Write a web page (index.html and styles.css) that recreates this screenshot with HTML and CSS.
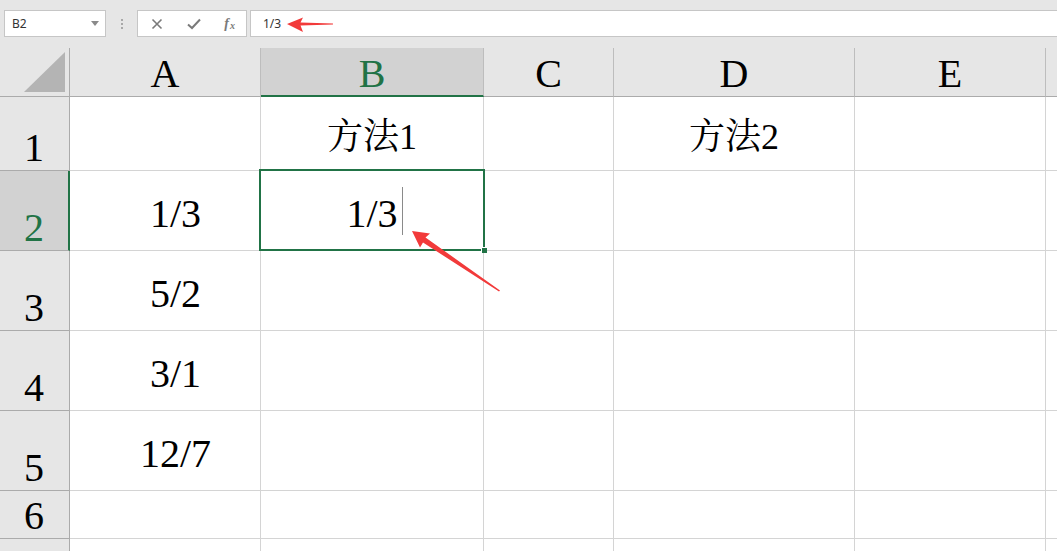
FILE: index.html
```html
<!DOCTYPE html>
<html>
<head>
<meta charset="utf-8">
<link rel="stylesheet" href="styles.css">
</head>
<body>
<div class="app">
  <div class="toolbar">
    <div class="namebox"><span>B2</span><svg class="dd" width="8" height="5" viewBox="0 0 8 5"><path d="M0 0H8L4 5Z" fill="#8a8a8a"/></svg></div>
    <div class="dots"><i></i><i></i><i></i></div>
    <div class="btns">
      <svg width="12" height="12" viewBox="0 0 12 12"><path d="M1.5 1.5L10.5 10.5M10.5 1.5L1.5 10.5" stroke="#7a7a7a" stroke-width="1.6"/></svg>
      <svg width="14" height="12" viewBox="0 0 14 12"><path d="M1 6.5L5 10L13 1.5" stroke="#7a7a7a" stroke-width="2" fill="none"/></svg>
      <span class="fx">f<span class="x">x</span></span>
    </div>
    <div class="formula">1/3</div>
  </div>
  <div class="sheet">
    <div class="corner"><svg width="42" height="40" viewBox="0 0 42 40"><path d="M41 0V40H0Z" fill="#b4b4b4"/></svg></div>
    <div class="ch">A</div>
    <div class="ch sel">B</div>
    <div class="ch">C</div>
    <div class="ch">D</div>
    <div class="ch">E</div>
    <div class="ch last"></div>

    <div class="rh">1</div>
    <div class="c"></div>
    <div class="c t cjk">方法1</div>
    <div class="c"></div>
    <div class="c t cjk">方法2</div>
    <div class="c"></div>
    <div class="c last"></div>

    <div class="rh sel">2</div>
    <div class="c t a">1/3</div>
    <div class="c t">1/3</div>
    <div class="c"></div>
    <div class="c"></div>
    <div class="c"></div>
    <div class="c last"></div>

    <div class="rh">3</div>
    <div class="c t a">5/2</div>
    <div class="c"></div>
    <div class="c"></div>
    <div class="c"></div>
    <div class="c"></div>
    <div class="c last"></div>

    <div class="rh">4</div>
    <div class="c t a">3/1</div>
    <div class="c"></div>
    <div class="c"></div>
    <div class="c"></div>
    <div class="c"></div>
    <div class="c last"></div>

    <div class="rh">5</div>
    <div class="c t a">12/7</div>
    <div class="c"></div>
    <div class="c"></div>
    <div class="c"></div>
    <div class="c"></div>
    <div class="c last"></div>

    <div class="rh">6</div>
    <div class="c"></div>
    <div class="c"></div>
    <div class="c"></div>
    <div class="c"></div>
    <div class="c"></div>
    <div class="c last"></div>

    <div class="rh"></div>
    <div class="c"></div>
    <div class="c"></div>
    <div class="c"></div>
    <div class="c"></div>
    <div class="c"></div>
    <div class="c last"></div>

    <div class="selection"><span class="handle"></span></div>
    <div class="caret"></div>
  </div>
  <svg class="arrows" width="1057" height="551" viewBox="0 0 1057 551">
    <path d="M287 24L303 17.5L300.5 22.5L333 23.5L333 24.5L300.5 25.5L303 32Z" fill="#f23a3a"/>
    <path d="M412 231L430 233.5L425.5 237.5L500 290.5L499 291.5L423 242.5L420 247.5Z" fill="#f23a3a"/>
  </svg>
</div>
</body>
</html>
```

FILE: styles.css
```css
* { box-sizing: border-box; }
html, body { margin: 0; padding: 0; }
body {
  width: 1057px;
  height: 551px;
  overflow: hidden;
  background: #ffffff;
  font-family: "Liberation Serif", "Noto Serif CJK SC", "Noto Sans CJK SC", serif;
}
.app { position: relative; width: 1057px; height: 551px; }

.toolbar {
  height: 48px;
  background: #e6e6e6;
  display: flex;
  align-items: flex-start;
  padding-top: 10px;
  padding-left: 4px;
  font-family: "Noto Sans", "Liberation Sans", sans-serif;
  font-size: 12px;
  color: #333;
}
.namebox {
  width: 102px;
  height: 27px;
  background: #fff;
  border: 1px solid #c6c6c6;
  display: flex;
  align-items: center;
  justify-content: space-between;
  padding: 0 6px 0 7px;
}
.namebox span { line-height: 1; }
.dots {
  width: 31px;
  height: 27px;
  display: flex;
  flex-direction: column;
  align-items: center;
  justify-content: center;
  gap: 2px;
}
.dots i { display: block; width: 2px; height: 2px; background: #a8a8a8; }
.btns {
  width: 110px;
  height: 27px;
  background: #fff;
  border: 1px solid #c6c6c6;
  display: flex;
  align-items: center;
  justify-content: space-between;
  padding: 0 11px 0 13px;
}
.fx {
  font-family: "Liberation Serif", serif;
  font-style: italic;
  font-weight: bold;
  font-size: 14px;
  color: #7a7a7a;
  line-height: 1;
  display: flex;
  align-items: flex-end;
}
.fx .x { font-size: 10px; margin-left: 1px; }
.formula {
  margin-left: 3px;
  flex: 1;
  height: 27px;
  background: #fff;
  border: 1px solid #c6c6c6;
  border-right: none;
  display: flex;
  align-items: center;
  padding-left: 12px;
}

.sheet {
  position: relative;
  display: grid;
  grid-template-columns: 70px 191px 223px 130px 241px 191px 1fr;
  grid-template-rows: 49px 74px 80px 80px 80px 80px 48px 13px;
  font-size: 40px;
  color: #000;
}
.corner {
  background: #e6e6e6;
  border-right: 1px solid #ababab;
  border-bottom: 1px solid #ababab;
  display: flex;
  align-items: flex-end;
  justify-content: flex-end;
  padding: 0 3px 4px 0;
}
.corner svg { display: block; }
.ch {
  background: #e6e6e6;
  border-right: 1px solid #bdbdbd;
  border-bottom: 1px solid #ababab;
  display: flex;
  align-items: flex-end;
  justify-content: center;
  line-height: 1;
  padding-bottom: 2px;
}
.ch.last { border-right: none; }
.ch.sel {
  background: #d2d2d2;
  color: #217346;
  border-bottom: 2px solid #217346;
  padding-bottom: 1px;
}
.rh {
  background: #e6e6e6;
  border-right: 1px solid #ababab;
  border-bottom: 1px solid #ababab;
  display: flex;
  align-items: flex-end;
  justify-content: center;
  line-height: 1;
  padding-bottom: 2px;
  padding-right: 1px;
}
.rh.sel {
  background: #d2d2d2;
  color: #217346;
  border-right: 2px solid #217346;
  padding-right: 0;
}
.c {
  border-right: 1px solid #d4d4d4;
  border-bottom: 1px solid #d4d4d4;
}
.c.last { border-right: none; }
.t {
  display: flex;
  align-items: center;
  justify-content: center;
  line-height: 1;
  padding-top: 6px;
}
.t.a { padding-left: 21px; }
.t.cjk { font-size: 36px; padding-top: 6px; }

.selection {
  position: absolute;
  left: 259px;
  top: 121px;
  width: 226px;
  height: 82px;
  border: 2px solid #217346;
  pointer-events: none;
}
.handle {
  position: absolute;
  right: -4px;
  bottom: -4px;
  width: 6px;
  height: 6px;
  background: #217346;
  border: 1px solid #fff;
  border-right: none;
  border-bottom: none;
}
.caret {
  position: absolute;
  left: 402px;
  top: 139px;
  width: 1px;
  height: 48px;
  background: #8a8a8a;
}
.arrows { position: absolute; left: 0; top: 0; pointer-events: none; }
```
